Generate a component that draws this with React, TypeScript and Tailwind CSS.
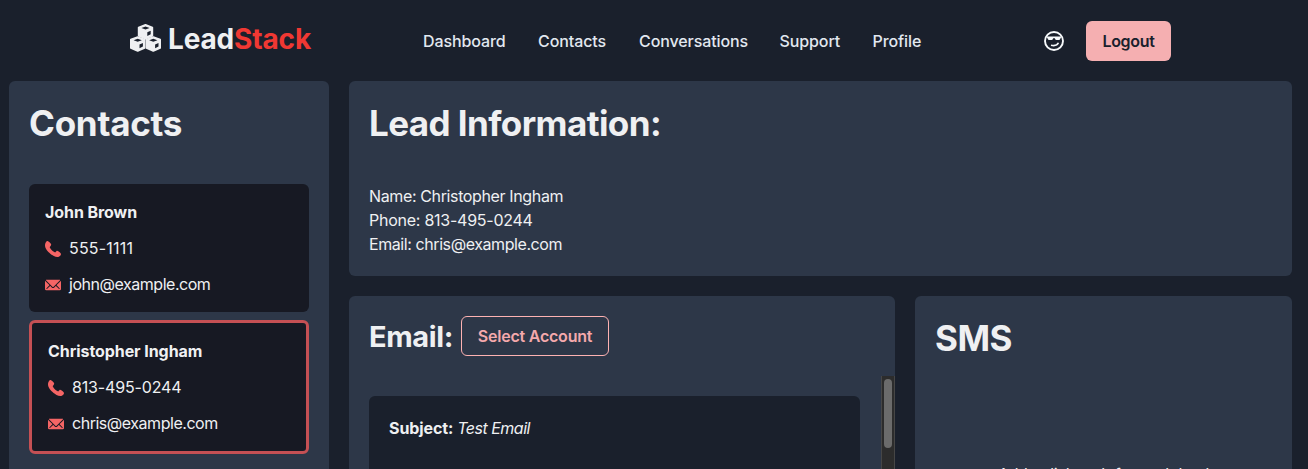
import React from "react";

const links = [
  { label: "Dashboard", cls: "w-[83px]" },
  { label: "Contacts", cls: "w-[69px]" },
  { label: "Conversations", cls: "w-[108.5px]" },
  { label: "Support", cls: "w-[61px]" },
  { label: "Profile", cls: "w-[50px]" },
];

function Cube({ x, y }: { x: number; y: number }) {
  return (
    <g transform={`translate(${x} ${y})`}>
      <path
        d="M7.7.8 14.6 3.4V11.7L7.7 14.7.8 11.7V3.4Z"
        fill="#eff0f2"
        stroke="#eff0f2"
        strokeWidth="1.6"
        strokeLinejoin="round"
      />
      <path d="M7.7 2.5 11.8 4 7.7 5.6 3.6 4ZM9.5 8.2 12.9 6.8V10.2L9.5 12Z" fill="#1a202c" />
    </g>
  );
}

function LogoIcon() {
  return (
    <svg viewBox="0 0 31 28" className="h-7 w-[31px]">
      <Cube x={0} y={12.2} />
      <Cube x={15.6} y={12.2} />
      <Cube x={7.8} y={0} />
    </svg>
  );
}

function CoolFaceIcon() {
  return (
    <svg viewBox="0 0 24 24" className="size-6" fill="none">
      <circle cx="12" cy="12" r="9" stroke="#f7fafc" strokeWidth="1.9" />
      <path d="M5 7.4H19V8.6L18.3 9.7Q18 11 16.8 11H14.3Q13 11 12.9 9.3H11.1Q11 11 9.7 11H7.2Q6 11 5.7 9.7L5 8.6Z" fill="#f7fafc" />
      <path d="M9 16.3Q14.8 17.6 16.4 13.8" stroke="#f7fafc" strokeWidth="1.6" />
    </svg>
  );
}

function PhoneIcon() {
  return (
    <svg viewBox="0 0 14 14" className="mt-0.5 size-4 shrink-0 fill-[#f56565]">
      <path d="M2.20731,0.0127209 C2.1105,-0.0066419 1.99432,-0.00664663 1.91687,0.032079 C0.871279,0.438698 0.212942,1.92964 0.0580392,2.95587 C-0.426031,6.28627 2.20731,9.17133 4.62766,11.0689 C6.77694,12.7534 10.9012,15.5223 13.3409,12.8503 C13.6507,12.5211 14.0186,12.037 13.9993,11.553 C13.9412,10.7397 13.186,10.1588 12.6051,9.71349 C12.1598,9.38432 11.2304,8.47427 10.6495,8.49363 C10.1267,8.51299 9.79754,9.05515 9.46837,9.38432 L8.88748,9.96521 C8.79067,10.062 7.55145,9.24878 7.41591,9.15197 C6.91248,8.8228 6.4284,8.45491 6.00242,8.04829 C5.57644,7.64167 5.18919,7.19632 4.86002,6.73161 C4.7632,6.59607 3.96933,5.41495 4.04678,5.31813 C4.04678,5.31813 4.72448,4.58234 4.91811,4.2919 C5.32473,3.67229 5.63453,3.18822 5.16982,2.45243 C4.99556,2.18135 4.78257,1.96836 4.55021,1.73601 C4.14359,1.34875 3.73698,0.942131 3.27227,0.612963 C3.02055,0.419335 2.59457,0.0708094 2.20731,0.0127209 Z" />
    </svg>
  );
}

function EmailIcon() {
  return (
    <svg viewBox="0 0 24 24" className="mt-0.5 size-4 shrink-0 fill-[#f56565]">
      <path d="M11.114,14.556a1.252,1.252,0,0,0,1.768,0L22.568,4.87a.5.5,0,0,0-.281-.849A1.966,1.966,0,0,0,22,4H2a1.966,1.966,0,0,0-.289.021.5.5,0,0,0-.281.849Z" />
      <path d="M23.888,5.832a.182.182,0,0,0-.2.039l-6.2,6.2a.251.251,0,0,0,0,.354l4.3,4.3a.75.75,0,1,1-1.06,1.061l-4.3-4.3a.251.251,0,0,0-.354,0l-2.1,2.1a2.75,2.75,0,0,1-3.89,0l-2.1-2.1a.251.251,0,0,0-.354,0l-4.3,4.3a.75.75,0,1,1-1.06-1.061l4.3-4.3a.251.251,0,0,0,0-.354l-6.2-6.2a.182.182,0,0,0-.2-.039A.182.182,0,0,0,0,6V18a2,2,0,0,0,2,2H22a2,2,0,0,0,2-2V6A.181.181,0,0,0,23.888,5.832Z" />
    </svg>
  );
}

function ContactCard({ name, phone, email, phoneCls, selected = false }: { name: string; phone: string; email: string; phoneCls: string; selected?: boolean }) {
  return (
    <div className={`flex flex-col gap-3 rounded-md bg-[#171923] p-4 ${selected ? "border-[3px] border-[#c55054]" : ""}`}>
      <p className="font-bold tracking-[-0.07px]">{name}</p>
      <p className={`flex items-center gap-2 ${phoneCls}`}><PhoneIcon />{phone}</p>
      <p className="flex items-center gap-2 tracking-[-0.47px]"><EmailIcon />{email}</p>
    </div>
  );
}

export default function App() {
  return (
    <div className="flex h-[469px] w-[1308px] flex-col overflow-hidden bg-[#1a202c] font-[Inter,sans-serif] text-base leading-6 text-[#eff0f2]">
      <header className="flex h-[81px] shrink-0 items-center pb-px pl-[130px]">
        <div className="flex w-[293px] items-center gap-[7px] pb-1">
          <LogoIcon />
          <span className="pt-0.5 text-[28px] leading-9 font-bold tracking-[-0.15px]">Lead<span className="text-[#f03833]">Stack</span></span>
        </div>
        <nav className="flex gap-8 pt-px font-medium tracking-[-0.1px] text-[#e2e8f0]">
          {links.map((l) => <a key={l.label} className={`${l.cls} whitespace-nowrap`}>{l.label}</a>)}
        </nav>
        <div className="mt-0.5 ml-[119.5px]"><CoolFaceIcon /></div>
        <button className="mt-0.5 ml-5 h-10 w-[85px] rounded-md bg-[#f5afb1] font-semibold tracking-[-0.3px] text-[#1a202c]">Logout</button>
      </header>
      <main className="flex min-h-0 flex-1 gap-5 pl-[9px]">
        <aside className="h-[500px] w-80 shrink-0 rounded-md bg-[#2d3748] p-5">
          <h1 className="text-[35px] leading-[44px] font-bold tracking-[-0.25px]">Contacts</h1>
          <div className="mt-[39px] flex flex-col gap-2">
            <ContactCard name="John Brown" phone="555-1111" email="john@example.com" phoneCls="tracking-[0.2px]" />
            <ContactCard name="Christopher Ingham" phone="813-495-0244" email="chris@example.com" phoneCls="tracking-[-0.15px]" selected />
          </div>
        </aside>
        <div className="flex w-[943px] shrink-0 flex-col gap-5">
          <section className="h-[195px] shrink-0 rounded-md bg-[#2d3748] p-5">
            <h1 className="text-[35px] leading-[44px] font-bold tracking-[-0.58px]">Lead Information:</h1>
            <div className="mt-[39px]">
              <p className="tracking-[-0.37px]">Name: Christopher Ingham</p>
              <p className="tracking-[-0.25px]">Phone: 813-495-0244</p>
              <p className="tracking-[-0.42px]">Email: chris@example.com</p>
            </div>
          </section>
          <div className="flex gap-5">
            <section className="flex h-[300px] w-[546px] flex-col rounded-md bg-[#2d3748] pt-5">
              <div className="flex h-10 items-center gap-2 pl-5">
                <h2 className="w-[84px] pt-px text-[29px] leading-9 font-bold tracking-[-0.4px]">Email:</h2>
                <button className="h-10 w-[148px] rounded-md border border-[#feb2b2] font-semibold tracking-[-0.22px] text-[#f5a9ac]">Select Account</button>
              </div>
              <div className="mt-5 flex flex-1 justify-between pl-5">
                <div className="mt-5 w-[491px] rounded-md bg-[#1a202c] p-5">
                  <b className="tracking-[-0.1px]">Subject:</b><i className="pl-1 tracking-[-0.5px]">Test Email</i>
                </div>
                <div className="flex w-3.5 justify-center border-x border-x-[#464646] bg-[#2c2c2c] pt-[3px]">
                  <div className="h-[69px] w-2 rounded-full bg-[#6b6b6b]" />
                </div>
              </div>
            </section>
            <section className="h-[300px] w-[377px] rounded-md bg-[#2d3748] p-5">
              <h2 className="text-[35px] leading-[44px] font-bold tracking-[-0.5px]">SMS</h2>
              <p className="mt-[102px] text-center tracking-[-0.4px] whitespace-nowrap">Add a dialer tab for each lead</p>
            </section>
          </div>
        </div>
      </main>
    </div>
  );
}
